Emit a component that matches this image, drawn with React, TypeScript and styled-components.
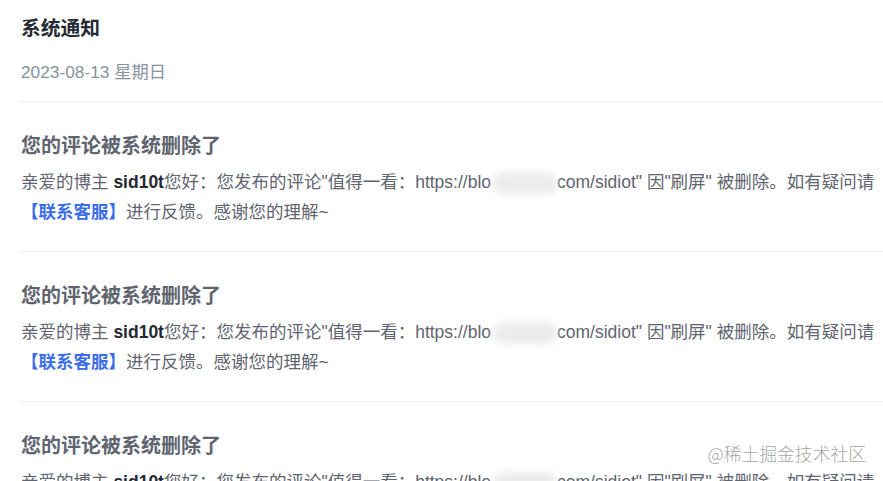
import React from "react";
import styled, { createGlobalStyle } from "styled-components";

const GlobalStyle = createGlobalStyle`
  html, body { margin: 0; padding: 0; background: #fff; }
  body {
    font-family: "Liberation Sans", Arial, "Noto Sans CJK SC", sans-serif;
    -webkit-font-smoothing: antialiased;
  }
`;

const Page = styled.div`
  position: relative;
  width: 883px;
  height: 481px;
  overflow: hidden;
  padding-left: 20px;
  box-sizing: border-box;
`;

const Header = styled.header`
  display: flex;
  flex-direction: column;
  gap: 18px;
  padding: 15px 0 16px 1px;
  border-bottom: 1px solid #eef0f3;
`;

const PageTitle = styled.h1`
  margin: 0;
  font-size: 19.8px;
  line-height: 26px;
  font-weight: 700;
  color: #252933;
`;

const DateText = styled.div`
  font-size: 17.3px;
  line-height: 26px;
  color: #8a919f;
`;

const Notice = styled.article`
  display: flex;
  flex-direction: column;
  gap: 8px;
  padding: 31px 0 24px 1px;
  border-bottom: 1px solid #eef0f3;
`;

const NoticeTitle = styled.h2`
  margin: 0;
  font-size: 20px;
  line-height: 26px;
  font-weight: 700;
  color: #60646f;
`;

const Body = styled.p`
  margin: 0;
  font-size: 17.5px;
  line-height: 30px;
  color: #5f6470;
  white-space: nowrap;
`;

const User = styled.strong`
  font-weight: 700;
  color: #252933;
`;

const Link = styled.a`
  font-weight: 700;
  color: #3a6ee8;
  text-decoration: none;
`;

const Redact = styled.span`
  display: inline-block;
  width: 64px;
  height: 22px;
  margin-left: 2px;
  vertical-align: middle;
  background: #ececec;
  border-radius: 10px;
  filter: blur(3.5px);
`;

const Watermark = styled.div`
  position: absolute;
  right: 17px;
  top: 440px;
  font-family: "Noto Sans CJK SC", sans-serif;
  font-size: 17.8px;
  line-height: 26px;
  font-weight: 300;
  color: rgba(140, 140, 140, 0.8);
  text-shadow: 0 0 2px #fff;
  pointer-events: none;
`;

const notices = [1, 2, 3];

export default function App() {
  return (
    <>
      <GlobalStyle />
      <Page>
        <Header>
          <PageTitle>系统通知</PageTitle>
          <DateText>2023-08-13 星期日</DateText>
        </Header>
        {notices.map((n) => (
          <Notice key={n}>
            <NoticeTitle>您的评论被系统删除了</NoticeTitle>
            <Body>
              亲爱的博主 <User>sid10t</User>您好：您发布的评论"值得一看：https://blo
              <Redact />
              com/sidiot" 因"刷屏" 被删除。如有疑问请
              <br />
              <Link href="#">【联系客服】</Link>进行反馈。感谢您的理解~
            </Body>
          </Notice>
        ))}
        <Watermark>@稀土掘金技术社区</Watermark>
      </Page>
    </>
  );
}
